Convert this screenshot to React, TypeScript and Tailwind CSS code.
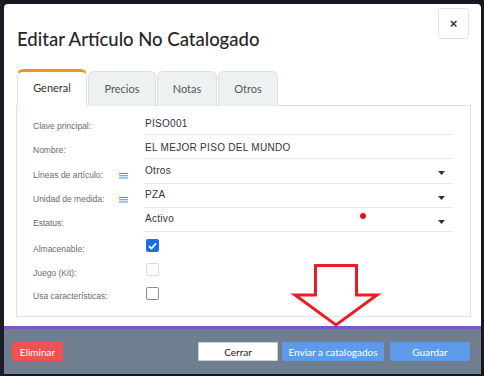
import React from "react";

const labelCls = "text-[8.5px] leading-[10px] text-[#6b6b6b]";
const valueCls = "text-[10px] leading-[12px] text-[#2e3440] tracking-[0.3px]";
const sans = { fontFamily: '"Liberation Sans", Arial, sans-serif' } as React.CSSProperties;
const lato = { fontFamily: 'Lato, "Noto Sans", sans-serif' } as React.CSSProperties;

function Burger() {
  return (
    <svg width="9" height="6" viewBox="0 0 9 6" className="ml-auto mr-[16px] mb-[1px]">
      <path d="M0 0.5H9M0 2.75H9M0 5H9" stroke="#4a8fe0" strokeWidth="1" />
    </svg>
  );
}

function Caret() {
  return (
    <svg width="7" height="4" viewBox="0 0 7 4" className="absolute right-[8px] top-[12px]">
      <path d="M0 0H7L3.5 4Z" fill="#333" />
    </svg>
  );
}

function InputRow({ label, value, icon, select, tall }: { label: string; value: string; icon?: boolean; select?: boolean; tall?: boolean }) {
  return (
    <div className={`flex ${tall ? "h-[25px]" : "h-[24px]"}`}>
      <div className="w-[111px] flex items-end pb-[4px]">
        <span className={labelCls} style={sans}>{label}</span>
        {icon && <Burger />}
      </div>
      <div className={`relative w-[309px] border-b border-[#e3e8ea] flex items-end ${select ? "pb-[6px]" : "pb-[4px]"} pl-[1px]`}>
        <span className={valueCls} style={sans}>{value}</span>
        {select && <Caret />}
      </div>
    </div>
  );
}

function CheckRow({ label, kind, pb }: { label: string; kind: "on" | "disabled" | "off"; pb: string }) {
  return (
    <div className="flex h-[24px]">
      <div className={`w-[111px] flex items-end ${pb}`}>
        <span className={labelCls} style={sans}>{label}</span>
      </div>
      <div className="flex items-center pl-[2px] pt-[3px]">
        {kind === "on" && (
          <div className="w-[13px] h-[13px] rounded-[2px] bg-[#1a6fe3] flex items-center justify-center">
            <svg width="9" height="8" viewBox="0 0 9 8">
              <path d="M1 4.2L3.4 6.5L8 1.3" stroke="white" strokeWidth="1.8" fill="none" />
            </svg>
          </div>
        )}
        {kind === "disabled" && <div className="w-[13px] h-[13px] rounded-[2px] border border-[#dcdcdc] bg-white" />}
        {kind === "off" && <div className="w-[13px] h-[13px] rounded-[2px] border border-[#8c8c96] bg-white" />}
      </div>
    </div>
  );
}

export default function App() {
  return (
    <div className="relative w-[484px] h-[376px] bg-[#17171f] overflow-hidden">
      <div className="absolute left-0 top-0 w-[4px] h-[376px] bg-[#1d1d26]" />
      <div className="ml-[4px] pt-[4px]">
        <div className="w-[477px] h-[370px] bg-white rounded-t-[4px] flex flex-col">
          {/* header */}
          <div className="flex items-start justify-between pl-[13px] pr-[12px] pt-[4px]">
            <h1 className="mt-[20px] text-[18.5px] leading-[22px] text-[#262626] font-medium" style={lato}>
              Editar Artículo No Catalogado
            </h1>
            <button className="w-[31px] h-[31px] border border-[#e4e4e4] rounded-[3px] flex items-center justify-center text-[#333] text-[13px] font-bold leading-none" style={sans}>
              ×
            </button>
          </div>

          {/* tabs */}
          <div className="mt-[19px] ml-[13px] flex items-end h-[37px] relative z-10 -mb-px" style={lato}>
            <div className="w-[70px] h-[37px] bg-white border-t-[3px] border-t-[#f7921e] border-x border-x-[#dde5e6] rounded-t-[6px] flex items-center justify-center text-[11px] text-[#333] pb-[2px]">
              General
            </div>
            <div className="ml-[1px] w-[68px] h-[35px] bg-[#edf1f2] border border-[#d9e2e4] border-b-0 rounded-t-[6px] flex items-center justify-center text-[11px] text-[#555] pt-[1px]">
              Precios
            </div>
            <div className="ml-[1px] w-[60px] h-[35px] bg-[#edf1f2] border border-[#d9e2e4] border-b-0 rounded-t-[6px] flex items-center justify-center text-[11px] text-[#555] pt-[1px]">
              Notas
            </div>
            <div className="ml-[1px] w-[60px] h-[35px] bg-[#edf1f2] border border-[#d9e2e4] border-b-0 rounded-t-[6px] flex items-center justify-center text-[11px] text-[#555] pt-[1px]">
              Otros
            </div>
          </div>

          {/* panel */}
          <div className="ml-[12px] w-[455px] h-[212px] border border-[#d9e4e4] pl-[16px] pt-[5px]">
            <InputRow label="Clave principal:" value="PISO001" />
            <InputRow label="Nombre:" value="EL MEJOR PISO DEL MUNDO" />
            <InputRow label="Líneas de artículo:" value="Otros" icon select tall />
            <InputRow label="Unidad de medida:" value="PZA" icon select />
            <InputRow label="Estatus:" value="Activo" select />
            <CheckRow label="Almacenable:" kind="on" pb="pb-[2px]" />
            <CheckRow label="Juego (Kit):" kind="disabled" pb="pb-[2px]" />
            <CheckRow label="Usa características:" kind="off" pb="pb-[3px]" />
          </div>

          <div className="flex-1" />

          {/* footer */}
          <div className="h-[48px] border-t-[3px] border-[#7b55c2] bg-[#6f7f8f] flex items-start pt-[13px] pl-[8px] pr-[11px]" style={lato}>
            <button className="w-[51px] h-[19px] rounded-[2px] bg-[#ef5252] text-white text-[10px] leading-none">
              Eliminar
            </button>
            <div className="flex-1" />
            <button className="w-[80px] h-[19px] rounded-[1px] bg-white border border-[#d0d0d0] text-[#222] text-[10px] leading-none">
              Cerrar
            </button>
            <button className="ml-[4px] w-[102px] h-[19px] rounded-[2px] bg-[#5d9be8] text-white text-[10px] leading-none">
              Enviar a catalogados
            </button>
            <button className="ml-[6px] w-[80px] h-[19px] rounded-[2px] bg-[#5d9be8] text-white text-[10px] leading-none">
              Guardar
            </button>
          </div>
        </div>
      </div>

      {/* annotations */}
      <div className="absolute left-[360px] top-[213px] w-[6px] h-[6px] rounded-full bg-[#e8131f]" />
      <svg className="absolute left-0 top-0 pointer-events-none" width="484" height="376" viewBox="0 0 484 376">
        <polygon
          points="315.5,265.5 356.5,265.5 356.5,295 377,295 336,325 295,295 315.5,295"
          fill="none"
          stroke="#ed1c24"
          strokeWidth="3"
          strokeLinejoin="miter"
        />
      </svg>
    </div>
  );
}
